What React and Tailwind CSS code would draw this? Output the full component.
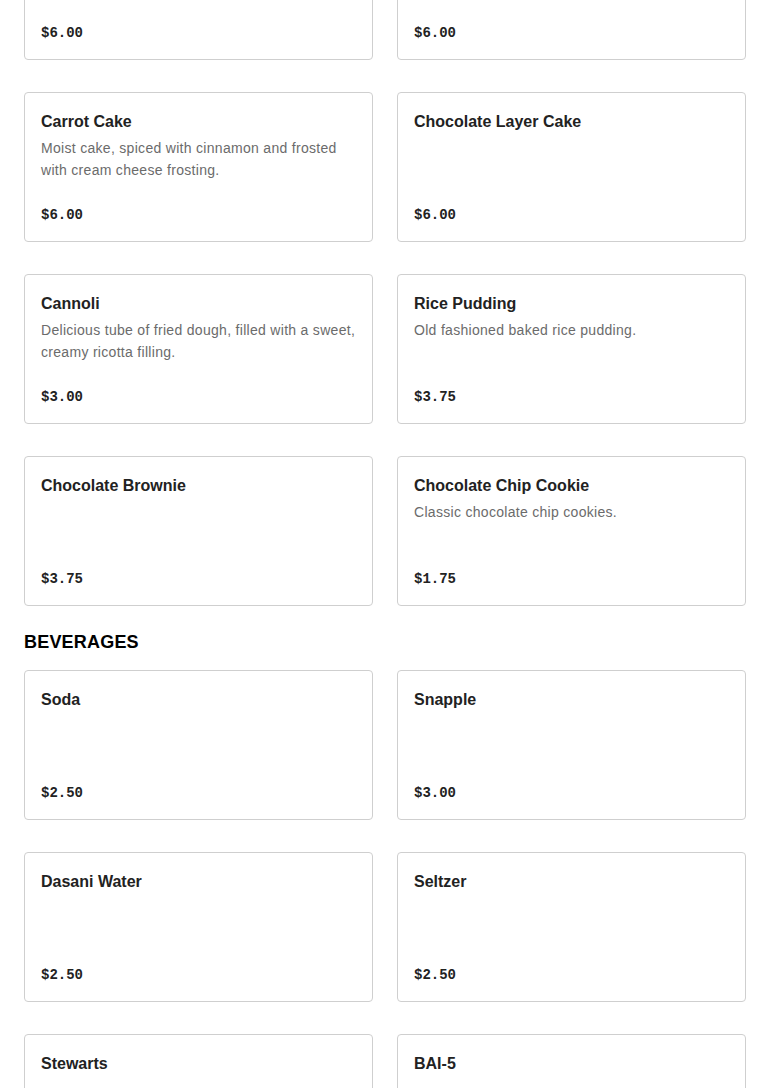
const sections = [
  {
    title: null,
    items: [
      { name: "Cheesecake", price: "$6.00" },
      { name: "Tiramisu", price: "$6.00" },
      { name: "Carrot Cake", desc: "Moist cake, spiced with cinnamon and frosted with cream cheese frosting.", price: "$6.00" },
      { name: "Chocolate Layer Cake", price: "$6.00" },
      { name: "Cannoli", desc: "Delicious tube of fried dough, filled with a sweet, creamy ricotta filling.", price: "$3.00" },
      { name: "Rice Pudding", desc: "Old fashioned baked rice pudding.", price: "$3.75" },
      { name: "Chocolate Brownie", price: "$3.75" },
      { name: "Chocolate Chip Cookie", desc: "Classic chocolate chip cookies.", price: "$1.75" },
    ],
  },
  {
    title: "BEVERAGES",
    items: [
      { name: "Soda", price: "$2.50" },
      { name: "Snapple", price: "$3.00" },
      { name: "Dasani Water", price: "$2.50" },
      { name: "Seltzer", price: "$2.50" },
      { name: "Stewarts", price: "$3.00" },
      { name: "BAI-5", price: "$3.50" },
    ],
  },
]

function MenuCard({ name, desc, price }) {
  return (
    <div className="flex h-[150px] flex-col rounded-[4px] border border-[#cfcfcf] bg-white px-4 pt-[17px] pb-[15px]">
      <h3 className="text-[16px] font-semibold leading-6 text-[#222]">{name}</h3>
      {desc && (
        <p className="mt-[3px] text-[14px] leading-[22px] tracking-[0.3px] text-[#6b6b6b]">{desc}</p>
      )}
      <div className="mt-auto font-['Liberation_Mono',monospace] text-[14px] font-bold leading-[22px] text-[#222]">
        {price}
      </div>
    </div>
  )
}

export default function App() {
  return (
    <div className="min-h-screen overflow-hidden bg-white font-['Liberation_Sans',Arial,sans-serif]">
      <div className="-mt-[90px] px-6">
        {sections.map((section, i) => (
          <div key={i}>
            {section.title && (
              <h2 className="pt-[22px] pb-[14px] text-[18px] font-extrabold leading-7 tracking-[0.2px] text-black">
                {section.title}
              </h2>
            )}
            <div className="grid grid-cols-2 gap-x-6 gap-y-8">
              {section.items.map((item) => (
                <MenuCard key={item.name} {...item} />
              ))}
            </div>
          </div>
        ))}
      </div>
    </div>
  )
}
